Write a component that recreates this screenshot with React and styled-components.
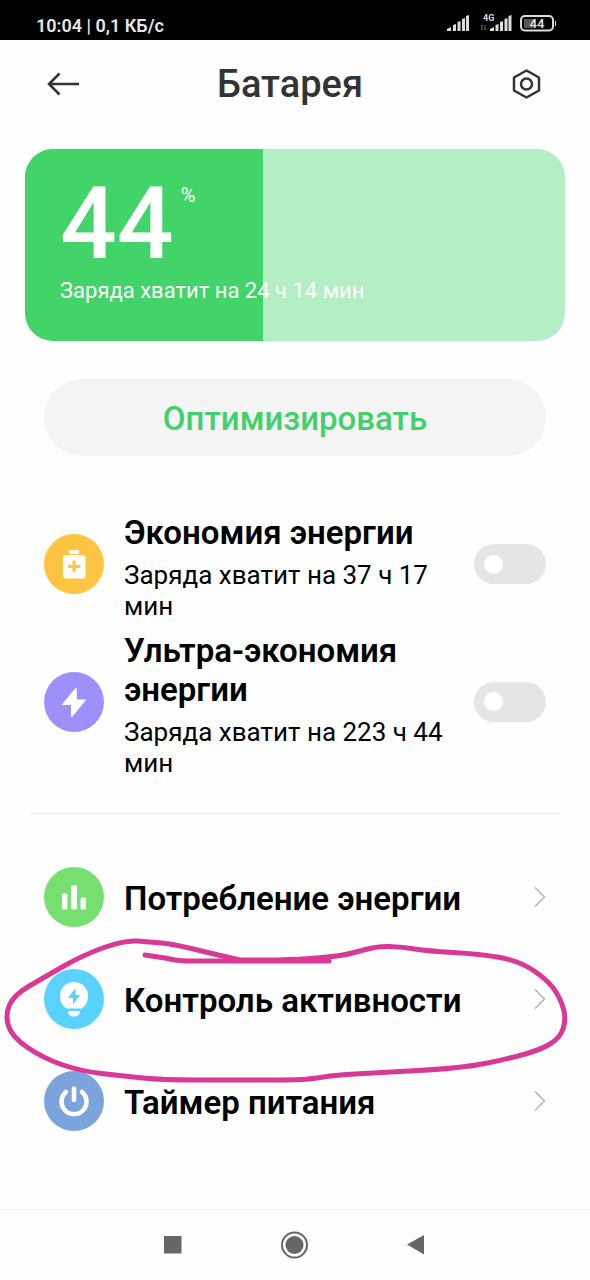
import { useState } from "react";
import styled, { createGlobalStyle } from "styled-components";

const GlobalStyle = createGlobalStyle`
  * {
    box-sizing: border-box;
  }
  body {
    margin: 0;
    background: #fefefe;
    font-family: Roboto, "Noto Sans", sans-serif;
    color: #000;
  }
  svg {
    display: block;
    flex-shrink: 0;
  }
`;

const Screen = styled.div`
  min-height: 100vh;
  display: flex;
  flex-direction: column;
`;

const StatusBar = styled.div`
  height: 40px;
  padding: 12px 34px 0 36px;
  display: flex;
  justify-content: space-between;
  background: #000;
  color: #e6e6e6;
  font-size: 18px;
  font-weight: 600;
  line-height: 28px;
`;

const Header = styled.header`
  height: 88px;
  padding: 0 44px;
  display: flex;
  align-items: center;
`;

const Title = styled.h1`
  flex: 1;
  margin: 0;
  padding-right: 10px;
  font-size: 38px;
  font-weight: 500;
  line-height: 44px;
  text-align: center;
  color: #333;
`;

const IconButton = styled.button`
  padding: 0;
  border: none;
  background: none;
  cursor: pointer;
`;

const Content = styled.main`
  flex: 1;
  padding-top: 21px;
`;

const ChargeCard = styled.section`
  position: relative;
  height: 192px;
  margin: 0 25px 38px;
  padding: 23px 35px;
  border-radius: 28px;
  overflow: hidden;
  background: #b3eec5;
  color: #fff;
`;

const ChargeFill = styled.div`
  position: absolute;
  inset: 0 auto 0 0;
  background: #42d369;
`;

const ChargeValue = styled.div`
  position: relative;
  display: flex;
  align-items: flex-start;
  gap: 7px;
  font-size: 100px;
  font-weight: 500;
  line-height: 104px;
`;

const Percent = styled.span`
  padding-top: 11px;
  font-size: 20px;
  font-weight: 400;
  line-height: 24px;
`;

const ChargeText = styled.p`
  position: relative;
  margin: 0;
  font-size: 22px;
  line-height: 30px;
`;

const OptimizeButton = styled.button`
  display: block;
  width: calc(100% - 88px);
  height: 77px;
  margin: 0 44px 49px;
  padding: 2px 0 0;
  border: none;
  border-radius: 39px;
  background: #f4f4f4;
  color: #43cf6b;
  font-family: inherit;
  font-size: 33px;
  font-weight: 500;
  cursor: pointer;
`;

const ModeRow = styled.div`
  display: flex;
  align-items: center;
  gap: 20px;
  padding: 0 44px;
`;

const Circle = styled.span`
  flex: 0 0 60px;
  height: 60px;
  border-radius: 50%;
  background: ${(props) => props.$color};
`;

const ModeInfo = styled.div`
  flex: 1;
  padding: 8px 0 1px;
`;

const ModeTitle = styled.label`
  display: block;
  font-size: 33px;
  font-weight: 600;
  line-height: 39px;
`;

const ModeText = styled.p`
  margin: 8px 0 0;
  font-size: 26px;
  line-height: 31px;
`;

const Toggle = styled.input`
  appearance: none;
  flex: 0 0 72px;
  height: 40px;
  margin: 0;
  padding: 0 10px;
  display: flex;
  align-items: center;
  justify-content: ${(props) => (props.checked ? "flex-end" : "flex-start")};
  border-radius: 20px;
  background: ${(props) => (props.checked ? "#42d369" : "#e5e5e5")};
  cursor: pointer;

  &::before {
    content: "";
    width: 19px;
    height: 19px;
    border-radius: 50%;
    background: #fff;
  }
`;

const Divider = styled.hr`
  height: 1px;
  margin: 33px 30px 32px;
  border: none;
  background: #e8e8e8;
`;

const Links = styled.nav`
  position: relative;
`;

const LinkRow = styled.a`
  height: 102px;
  padding: 0 44px;
  display: flex;
  align-items: center;
  gap: 20px;
  color: inherit;
  text-decoration: none;
`;

const LinkTitle = styled.span`
  flex: 1;
  padding-top: 3px;
  font-size: 33px;
  font-weight: 600;
  line-height: 39px;
`;

const Marker = styled.svg`
  position: absolute;
  inset: 0;
  width: 100%;
  height: 100%;
  overflow: visible;
  pointer-events: none;
`;

const NavBar = styled.footer`
  height: 71px;
  padding: 0 158px;
  display: flex;
  align-items: center;
  justify-content: space-between;
  border-top: 1px solid #ededed;
`;

const modes = [
  {
    id: "saver",
    title: "Экономия энергии",
    text: "Заряда хватит на 37 ч 17 мин",
    color: "#ffc542",
    icon: (
      <>
        <rect x="25" y="16" width="10" height="4" rx="1" fill="#fff" />
        <rect x="19" y="21" width="22.500" height="23.500" rx="3" fill="#fff" />
        <path d="M30 26.500v11.500M24 32.500h12.500" stroke="#ffc542" strokeWidth="3" />
      </>
    ),
  },
  {
    id: "ultra",
    title: "Ультра-экономия энергии",
    text: "Заряда хватит на 223 ч 44 мин",
    color: "#9d90fb",
    icon: (
      <path
        d="M32 16 18.500 32.500h9V45L41.500 28H32.500Z"
        fill="#fff"
        stroke="#fff"
        strokeLinejoin="round"
      />
    ),
  },
];

const links = [
  {
    id: "usage",
    title: "Потребление энергии",
    color: "#76df6f",
    icon: (
      <g fill="#fff">
        <rect x="18" y="26.500" width="5.500" height="16" rx="1.500" />
        <rect x="27" y="18" width="6" height="24.500" rx="2" />
        <rect x="36.500" y="30.500" width="5.500" height="12" rx="1.500" />
      </g>
    ),
  },
  {
    id: "activity",
    title: "Контроль активности",
    color: "#59d2fd",
    icon: (
      <>
        <path
          d="M22.500 39.500C18.500 37 16 32.500 16 27a14 14 0 0 1 28 0c0 5.500-2.500 10-6.500 12.500Z"
          fill="#fff"
        />
        <path d="M24 42h12c0 3.500-2.500 5.500-6 5.500S24 45.500 24 42Z" fill="#fff" />
        <path d="M31.500 19 24 29h5v6.500L36 26h-4.500Z" fill="#59d2fd" />
      </>
    ),
  },
  {
    id: "timer",
    title: "Таймер питания",
    color: "#7ba4dd",
    icon: (
      <g fill="none" stroke="#fff" strokeWidth="4.500" strokeLinecap="round">
        <path d="M22 21a12.500 12.500 0 1 0 16 0" />
        <path d="M30 17.500v11.500" />
      </g>
    ),
  },
];

// Points of the marker line, relative to the top of the links list
const loopPoints = [
  [240, 114], [222, 110], [173, 98], [150, 96], [125, 94], [83, 109],
  [43, 132], [14, 149], [5, 169], [12, 191], [43, 212], [80, 225],
  [123, 230], [163, 234], [230, 234], [293, 234], [310, 233], [337, 229],
  [373, 227], [463, 222], [507, 213], [540, 204], [560, 192], [566, 174],
  [562, 156], [550, 136], [520, 115], [480, 108], [427, 105], [403, 101],
  [377, 100], [350, 108], [330, 111], [290, 114], [240, 114],
];

const smoothPath = (points) => {
  let d = `M${points[0].join(" ")}`;
  for (let i = 1; i < points.length - 1; i++) {
    const [x, y] = points[i];
    const [nextX, nextY] = points[i + 1];
    d += `Q${x} ${y} ${(x + nextX) / 2} ${(y + nextY) / 2}`;
  }
  return `${d}L${points[points.length - 1].join(" ")}`;
};

const RoundIcon = ({ color, children }) => (
  <Circle $color={color}>
    <svg width="60" height="60" viewBox="0 0 60 60" aria-hidden="true">
      {children}
    </svg>
  </Circle>
);

const StatusIcons = () => (
  <svg width="110" height="22" viewBox="446 14 110 22" fill="#dcdcdc">
    <path d="M447 33v-2l4-2v4zM453 33v-6l3-1v7zM457.500 33v-9l3-1v10zM462 33v-12l3-1v13zM466 33V18l3-1v16z" />
    <path d="M490 33v-2l4-2v4zM495.500 33v-6l3-1v7zM500 33v-9l3-1v10zM504.500 33v-12l3-1v13zM508.500 33V18l3-1v16z" />
    <text x="483" y="23" fontSize="9" fontWeight="700">
      4G
    </text>
    <path
      d="M482 32v-5l-1 1M485 27v5l1-1"
      fill="none"
      stroke="#777"
      strokeWidth="1"
    />
    <rect x="524" y="21" width="9" height="9" fill="#555" />
    <rect
      x="521"
      y="18"
      width="32"
      height="14.500"
      rx="4"
      fill="none"
      stroke="#dcdcdc"
      strokeWidth="2"
    />
    <path d="M555 23h1v5h-1z" />
    <text x="537" y="30" fontSize="13" fontWeight="700" textAnchor="middle">
      44
    </text>
  </svg>
);

const App = () => {
  const [enabled, setEnabled] = useState({ saver: false, ultra: false });
  const charge = 44;

  const toggleMode = (id) => {
    setEnabled({ ...enabled, [id]: !enabled[id] });
  };

  return (
    <Screen>
      <GlobalStyle />
      <StatusBar>
        <span>10:04 | 0,1 КБ/с</span>
        <StatusIcons />
      </StatusBar>
      <Header>
        <IconButton aria-label="Назад">
          <svg width="40" height="40" viewBox="0 0 40 40" fill="none" stroke="#333" strokeWidth="2.500">
            <path d="M35 20H5M15.500 9.500 5 20l10.500 10.500" />
          </svg>
        </IconButton>
        <Title>Батарея</Title>
        <IconButton aria-label="Настройки">
          <svg width="40" height="40" viewBox="0 0 40 40" fill="none" stroke="#333">
            <path
              d="M20.500 6.500 33 13.500v13L20.500 33.500 8 26.500v-13Z"
              strokeWidth="2.500"
              strokeLinejoin="round"
            />
            <circle cx="20.500" cy="20" r="5.500" strokeWidth="2.500" />
          </svg>
        </IconButton>
      </Header>
      <Content>
        <ChargeCard>
          <ChargeFill style={{ width: `${charge}%` }} />
          <ChargeValue>
            {charge}
            <Percent>%</Percent>
          </ChargeValue>
          <ChargeText>Заряда хватит на 24 ч 14 мин</ChargeText>
        </ChargeCard>
        <OptimizeButton>Оптимизировать</OptimizeButton>
        {modes.map((mode) => (
          <ModeRow key={mode.id}>
            <RoundIcon color={mode.color}>{mode.icon}</RoundIcon>
            <ModeInfo>
              <ModeTitle htmlFor={mode.id}>{mode.title}</ModeTitle>
              <ModeText>{mode.text}</ModeText>
            </ModeInfo>
            <Toggle
              id={mode.id}
              type="checkbox"
              checked={enabled[mode.id]}
              onChange={() => toggleMode(mode.id)}
            />
          </ModeRow>
        ))}
        <Divider />
        <Links>
          {links.map((link) => (
            <LinkRow key={link.id} href={`#${link.id}`}>
              <RoundIcon color={link.color}>{link.icon}</RoundIcon>
              <LinkTitle>{link.title}</LinkTitle>
              <svg width="12" height="22" viewBox="0 0 12 22" fill="none" stroke="#b5b5b5" strokeWidth="1.500">
                <path d="M1 1.500 10.500 11 1 20.500" />
              </svg>
            </LinkRow>
          ))}
          <Marker
            viewBox="0 0 590 306"
            fill="none"
            stroke="#d93897"
            strokeWidth="5"
            strokeLinecap="round"
            strokeLinejoin="round"
          >
            <path d={smoothPath(loopPoints)} />
            <path d="M145 109 165 112Q178 115 187 115H329" />
          </Marker>
        </Links>
      </Content>
      <NavBar>
        <IconButton aria-label="Недавние">
          <svg width="30" height="30" viewBox="0 0 30 30">
            <rect x="6" y="6" width="17.500" height="17.500" fill="#666" />
          </svg>
        </IconButton>
        <IconButton aria-label="Домой">
          <svg width="30" height="30" viewBox="0 0 30 30">
            <circle cx="14.500" cy="15" r="12.500" fill="none" stroke="#666" strokeWidth="2" />
            <circle cx="14.500" cy="15" r="9" fill="#666" />
          </svg>
        </IconButton>
        <IconButton aria-label="Вернуться">
          <svg width="30" height="30" viewBox="0 0 30 30">
            <path d="M5 14.500 22 5v19.500Z" fill="#666" />
          </svg>
        </IconButton>
      </NavBar>
    </Screen>
  );
};

export default App;
